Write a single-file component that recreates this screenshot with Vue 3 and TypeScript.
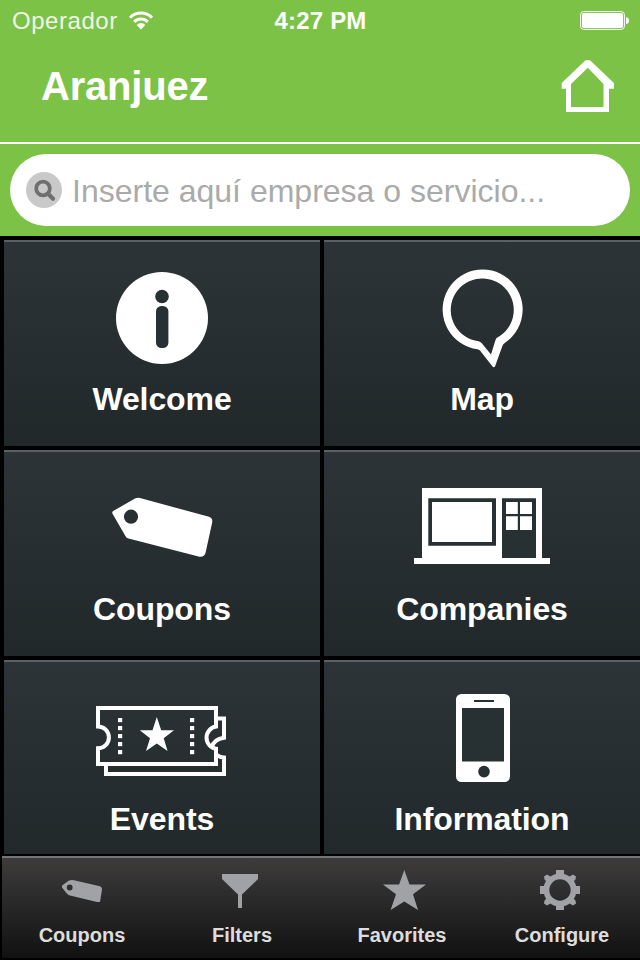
<script setup lang="ts">
type TileIcon = 'info' | 'pin' | 'tag' | 'shop' | 'ticket' | 'phone'
type TabIcon = 'tag' | 'funnel' | 'star' | 'gear'

const tiles: { label: string; icon: TileIcon }[] = [
  { label: 'Welcome', icon: 'info' },
  { label: 'Map', icon: 'pin' },
  { label: 'Coupons', icon: 'tag' },
  { label: 'Companies', icon: 'shop' },
  { label: 'Events', icon: 'ticket' },
  { label: 'Information', icon: 'phone' },
]

const tabs: { label: string; icon: TabIcon }[] = [
  { label: 'Coupons', icon: 'tag' },
  { label: 'Filters', icon: 'funnel' },
  { label: 'Favorites', icon: 'star' },
  { label: 'Configure', icon: 'gear' },
]

const perforation = [0, 1, 2, 3, 4]
</script>

<template>
  <div class="screen">
    <header class="top">
      <div class="status">
        <div class="carrier">
          <span class="operator">Operador</span>
          <svg class="wifi" width="26" height="20" viewBox="0 0 26 20">
            <path d="M2 6.700a15.500 15.500 0 0 1 22 0" />
            <path d="M6.200 10.900a9.600 9.600 0 0 1 13.600 0" />
            <path class="dot" d="M8.700 13.900a6 6 0 0 1 8.600 0L13 18.400z" />
          </svg>
        </div>
        <span class="clock">4:27 PM</span>
        <svg class="battery" width="50" height="20" viewBox="0 0 50 20">
          <rect class="shell" x="0.600" y="0.600" width="43.800" height="17.800" rx="3" />
          <rect x="2" y="2" width="41" height="15" rx="1.800" />
          <path d="M46 6.300q3 .4 3 3.400t-3 3.400z" />
        </svg>
      </div>
      <nav class="nav">
        <h1 class="title">Aranjuez</h1>
        <svg class="home" width="54" height="54" viewBox="0 0 54 54">
          <path
            fill-rule="evenodd"
            d="M24.500 1.300H29L53 24V29.700H48V53H5V29.700H0.700V24ZM26.800 8.700 10 25V48H42.500V25Z"
          />
        </svg>
      </nav>
    </header>

    <div class="search">
      <div class="field">
        <svg class="lens" width="36" height="36" viewBox="0 0 36 36">
          <circle cx="18" cy="18" r="18" fill="#c9c9c9" />
          <circle cx="17" cy="16.500" r="6.800" fill="none" stroke="#6f6f6f" stroke-width="3.800" />
          <path d="M22 21.600 27 26.800" stroke="#6f6f6f" stroke-width="4.200" stroke-linecap="round" />
        </svg>
        <span class="placeholder">Inserte aquí empresa o servicio...</span>
      </div>
    </div>

    <main class="grid">
      <section v-for="tile in tiles" :key="tile.label" class="tile">
        <svg class="glyph" width="140" height="110" viewBox="0 0 140 110">
          <template v-if="tile.icon === 'info'">
            <circle cx="70" cy="56" r="46" />
            <circle class="hole" cx="70" cy="34.500" r="6.800" />
            <rect class="hole" x="64" y="44" width="12.400" height="42" rx="5.500" />
          </template>
          <path
            v-else-if="tile.icon === 'pin'"
            fill-rule="evenodd"
            d="M65.500 87.200A40 40 0 1 1 93 80.700Q91 82 90.400 84L83 104.500Q81.800 106 80.500 104.500L68 88.500Q67 87.400 65.500 87.200ZM66.500 79.200Q68.500 79.600 69.800 81.200L79 92.500 83.500 78Q84 76.600 85.300 75.600A31.500 31.500 0 1 0 66.500 79.200Z"
          />
          <path
            v-else-if="tile.icon === 'tag'"
            fill-rule="evenodd"
            d="M20.400 41.500Q19.800 40 21.200 39L43 26.600Q45.300 25.300 48 26L117 44.800Q120.600 46 120.300 50L113.500 81Q112 85.500 107.500 84.700L36.500 66.600Q34.400 66 33.400 64ZM39 37.600A7.100 7.100 0 1 0 39 51.800 7.100 7.100 0 1 0 39 37.600Z"
          />
          <template v-else-if="tile.icon === 'shop'">
            <path d="M10 16H130V86H138V92H2V86H10Z" />
            <path class="hole" d="M16.300 26.300H84V73.700H16.300zM90 26.300H124V86H90z" />
            <path d="M20 30H80V70H20zM94 30H105.800V42H94zM108 30H120V42H108zM94 44.200H105.800V58H94zM108 44.200H120V58H108z" />
          </template>
          <template v-else-if="tile.icon === 'ticket'">
            <path class="line" d="M14 84V92H132V75.600Q128 75.500 125 73M125 36.500H132V55.800C125.500 56.500 121 60 119.500 66" />
            <path class="line" d="M6 26H124V44.500A11.300 11.300 0 0 0 124 66.800V82H6V66.300A10.900 10.900 0 0 0 6 44.500Z" />
            <path d="M64.800 35 69.200 48.200H82L71.700 56.300 75.600 69 64.800 61.400 54 69 58 56.300 47.800 48.200H60.500Z" />
            <g v-for="n in perforation" :key="n">
              <rect x="26" :y="36 + n * 8" width="4.200" height="4.200" />
              <rect x="98" :y="36 + n * 8" width="4.200" height="4.200" />
            </g>
          </template>
          <template v-else>
            <rect x="44" y="12" width="54" height="88" rx="5.500" />
            <path class="hole" d="M50 26H92V79.500H50zM62 18H82V20H62z" />
            <circle class="hole" cx="72" cy="89.600" r="5.800" />
          </template>
        </svg>
        <h2 class="label">{{ tile.label }}</h2>
      </section>
    </main>

    <footer class="tabs">
      <div v-for="tab in tabs" :key="tab.label" class="tab">
        <svg class="mini" width="50" height="44" viewBox="0 0 50 44">
          <path
            v-if="tab.icon === 'tag'"
            fill-rule="evenodd"
            d="M5 15.500 12 10.500Q14 9.600 17 10.200L43 16.300Q45.200 17 45 19.500L43 32H40L14 25.800Q10.500 25 9 22.500L5 17.500ZM12.700 14.600A2.900 2.900 0 1 0 12.700 20.400 2.900 2.900 0 1 0 12.700 14.600Z"
          />
          <path v-else-if="tab.icon === 'funnel'" d="M5 4H41V9L25 24.500V38H21V24.500L5 9Z" />
          <path
            v-else-if="tab.icon === 'star'"
            d="M27.300 0 32.500 14.500H49L36 24.200 41 40 27.300 31.500 13.600 40 19 24.200 6 14.500H22.100Z"
          />
          <template v-else>
            <circle cx="23" cy="20" r="13.600" fill="none" stroke="#a0a2a6" stroke-width="5.800" />
            <path d="M19 0H27V6H19zM19 34H27V40H19zM3 16H9V24H3zM37 16H43V24H37z" />
            <path d="M7 6.500 10 4.500 16 8 11 13 7.500 9.500zM39 6.500 36 4.500 30 8 35 13 38.500 9.500zM7 33.500 10 35.500 16 32 11 27 7.500 30.500zM39 33.500 36 35.500 30 32 35 27 38.500 30.500z" />
          </template>
        </svg>
        <span class="tab-label">{{ tab.label }}</span>
      </div>
    </footer>
  </div>
</template>

<style>
body {
  margin: 0;
  background: #000;
}
</style>

<style scoped>
.screen {
  width: 640px;
  height: 960px;
  overflow: hidden;
  display: flex;
  flex-direction: column;
  background: #000;
  color: #fff;
  font-family: 'Liberation Sans', Arial, sans-serif;
}

.top {
  box-sizing: border-box;
  height: 144px;
  flex: none;
  background: #7bc246;
  border-bottom: 2px solid #fff;
}

.status {
  box-sizing: border-box;
  height: 42px;
  display: grid;
  grid-template-columns: 1fr auto 1fr;
  align-items: center;
  padding: 0 10px 0 12px;
  font-size: 24px;
  line-height: 42px;
}

.carrier {
  display: flex;
  align-items: center;
  gap: 10px;
}

.operator {
  letter-spacing: 0.55px;
  opacity: 0.88;
}

.wifi {
  fill: none;
  stroke: #fff;
  stroke-width: 3;
}

.wifi .dot {
  fill: #fff;
  stroke: none;
}

.clock {
  margin-left: -1px;
  font-weight: bold;
  letter-spacing: 0.2px;
}

.battery {
  justify-self: end;
  fill: #fff;
}

.battery .shell {
  fill: none;
  stroke: #fff;
  stroke-width: 1;
}

.nav {
  display: flex;
  justify-content: space-between;
  align-items: center;
  height: 88px;
  padding: 0 25px 0 41px;
}

.title {
  margin: 0;
  font-size: 40px;
  line-height: 46px;
  letter-spacing: -0.2px;
}

.home {
  fill: #fff;
}

.search {
  box-sizing: border-box;
  height: 92px;
  flex: none;
  padding: 10px;
  background: #7bc246;
}

.field {
  box-sizing: border-box;
  height: 72px;
  display: flex;
  align-items: center;
  gap: 10px;
  padding-left: 16px;
  border-radius: 36px;
  background: #fff;
}

.placeholder {
  padding-top: 2px;
  font-size: 32px;
  line-height: 36px;
  color: #aaa;
}

.grid {
  flex: none;
  height: 614px;
  overflow: hidden;
  display: grid;
  grid-template-columns: 316px 316px;
  grid-auto-rows: 206px;
  gap: 4px;
  margin: 4px 0 0 4px;
}

.tile {
  display: flex;
  flex-direction: column;
  align-items: center;
  box-sizing: border-box;
  padding-top: 20px;
  border-top: 2px solid #596063;
  background: linear-gradient(#2c3437, #20282a);
}

.glyph {
  flex: none;
  fill: #fff;
}

.hole {
  fill: #273032;
}

.line {
  fill: none;
  stroke: #fff;
  stroke-width: 4;
}

.label {
  margin: 9px 0 0;
  font-size: 32px;
  line-height: 36px;
  letter-spacing: -0.1px;
}

.tabs {
  flex: none;
  display: grid;
  grid-template-columns: repeat(4, 160px);
  box-sizing: border-box;
  height: 102px;
  margin: 2px 0 0 2px;
  border-top: 2px solid #757575;
  background: linear-gradient(#3e3b3b, #292929 45%, #111);
}

.tab {
  display: flex;
  flex-direction: column;
  align-items: center;
  padding-top: 12px;
}

.mini {
  fill: #a0a2a6;
}

.tab-label {
  margin-top: 10px;
  font-size: 20px;
  font-weight: bold;
  line-height: 22px;
  color: #ddd;
}
</style>
